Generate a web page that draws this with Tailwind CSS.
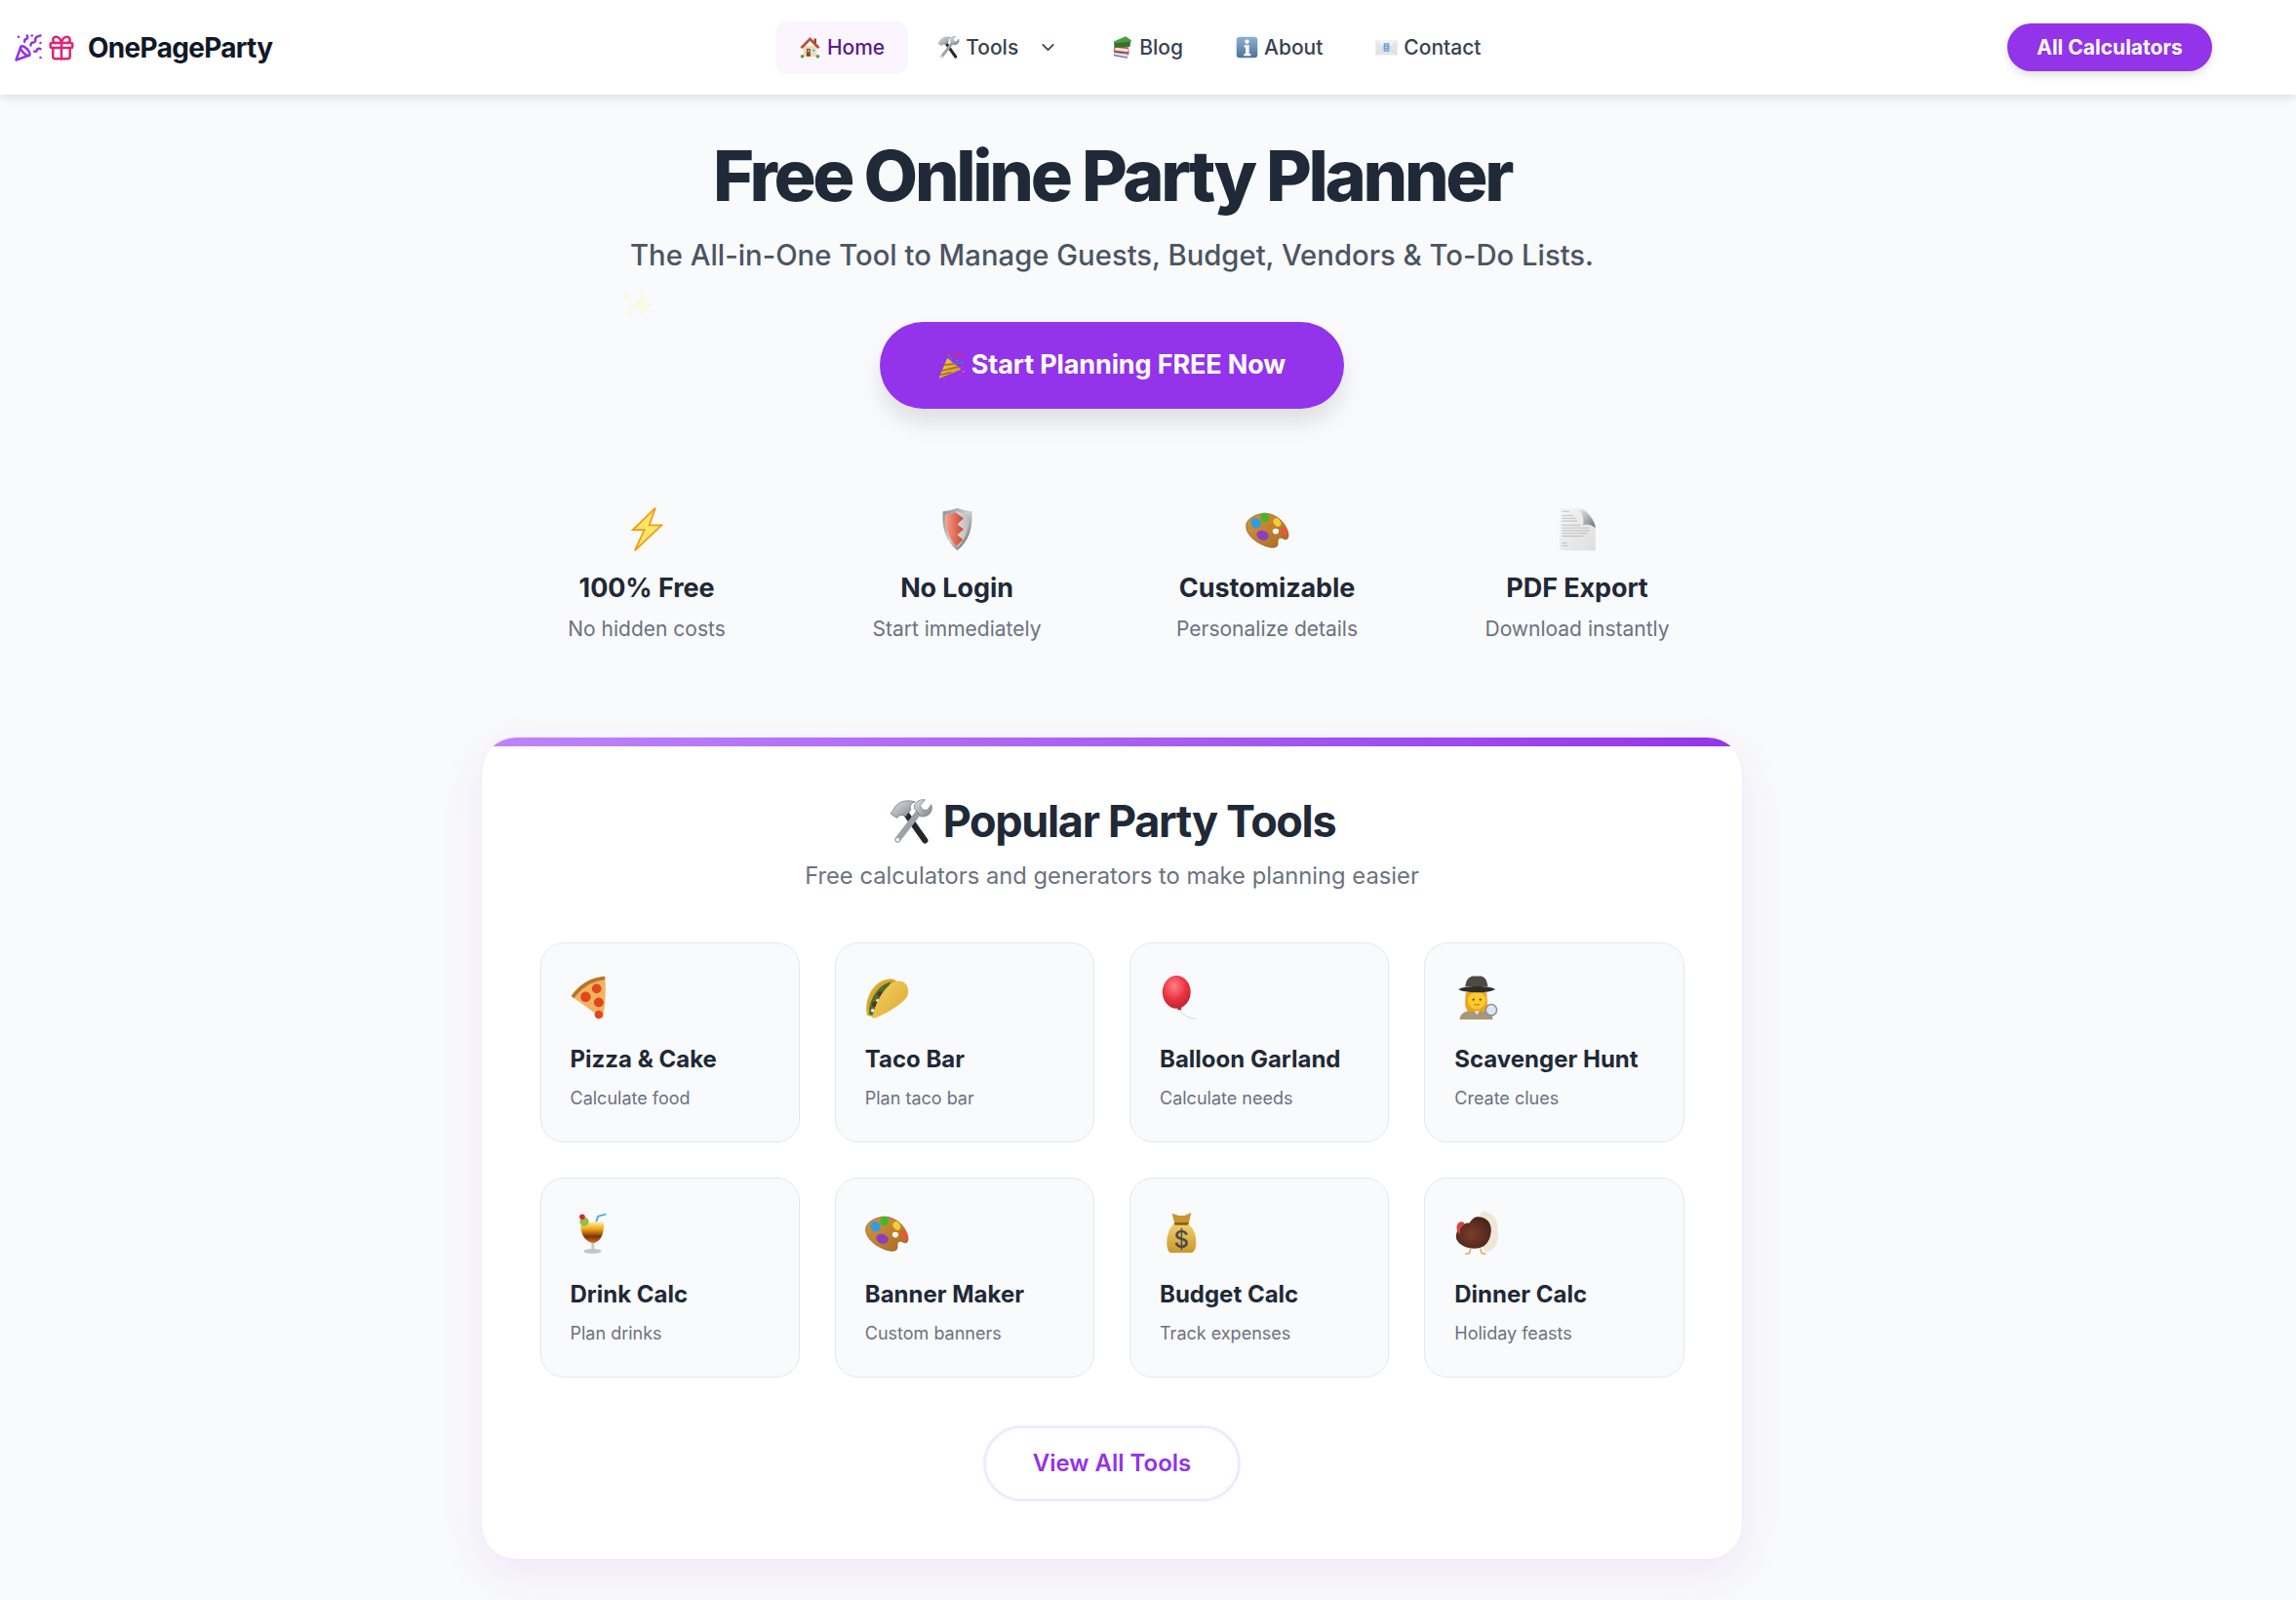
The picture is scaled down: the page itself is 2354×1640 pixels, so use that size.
<!DOCTYPE html>
<html lang="en">
<head>
    <meta charset="UTF-8">
    <meta name="viewport" content="width=device-width, initial-scale=1.0">
    <title>OnePageParty - Free Online Party Planner</title>
    <script src="https://cdn.jsdelivr.net/npm/@tailwindcss/browser@4"></script>
</head>
<body class="bg-[#f9fafb] font-['Inter',sans-serif] overflow-hidden">

    <!-- emoji drawings, reused below -->
    <svg class="absolute w-0 h-0" aria-hidden="true">
        <defs>
            <linearGradient id="g-wood" x1="0" y1="0" x2="1" y2="1"><stop offset="0" stop-color="#d9963a"/><stop offset="1" stop-color="#a86a22"/></linearGradient>
            <linearGradient id="g-steel" x1="0" y1="0" x2="1" y2="1"><stop offset="0" stop-color="#e2e5e8"/><stop offset="1" stop-color="#7b8087"/></linearGradient>
            <linearGradient id="g-info" x1="0" y1="0" x2="0" y2="1"><stop offset="0" stop-color="#8fb2d3"/><stop offset="1" stop-color="#4c7297"/></linearGradient>
            <linearGradient id="g-shield" x1="0" y1="0" x2="1" y2="1"><stop offset="0" stop-color="#8a8a8a"/><stop offset="0.5" stop-color="#d0d0d0"/><stop offset="1" stop-color="#4e4e4e"/></linearGradient>
            <linearGradient id="g-shield-in" x1="0" y1="0" x2="1" y2="0"><stop offset="0" stop-color="#f2f2f2"/><stop offset="1" stop-color="#bcbcbc"/></linearGradient>
            <linearGradient id="g-red" x1="0" y1="0" x2="1" y2="0"><stop offset="0" stop-color="#fb9c88"/><stop offset="1" stop-color="#c9452f"/></linearGradient>
            <linearGradient id="g-page" x1="0" y1="0" x2="1" y2="1"><stop offset="0" stop-color="#f6f6f6"/><stop offset="1" stop-color="#dedede"/></linearGradient>
            <linearGradient id="g-curl" x1="0" y1="0" x2="1" y2="1"><stop offset="0" stop-color="#fafafa"/><stop offset="1" stop-color="#6f6f6f"/></linearGradient>
            <radialGradient id="g-balloon" cx="0.42" cy="0.32" r="0.75"><stop offset="0" stop-color="#ff8088"/><stop offset="0.55" stop-color="#ea3340"/><stop offset="1" stop-color="#b3202d"/></radialGradient>
            <linearGradient id="g-drink" x1="0" y1="0" x2="0" y2="1"><stop offset="0" stop-color="#fff0b0"/><stop offset="0.35" stop-color="#f3a512"/><stop offset="0.7" stop-color="#7a300a"/><stop offset="1" stop-color="#d87a1a"/></linearGradient>
            <linearGradient id="g-bag" x1="0" y1="0" x2="0" y2="1"><stop offset="0" stop-color="#f0cd6a"/><stop offset="1" stop-color="#c9982f"/></linearGradient>
            <linearGradient id="g-shell" x1="0" y1="0" x2="1" y2="1"><stop offset="0" stop-color="#f5d465"/><stop offset="1" stop-color="#dba72f"/></linearGradient>
            <radialGradient id="g-turkey" cx="0.45" cy="0.55" r="0.6"><stop offset="0" stop-color="#7a3f2c"/><stop offset="1" stop-color="#4a2318"/></radialGradient>
            <linearGradient id="g-cone" x1="0" y1="0" x2="1" y2="1"><stop offset="0" stop-color="#f7d655"/><stop offset="1" stop-color="#c78d1d"/></linearGradient>
        </defs>

        <symbol id="e-house" viewBox="0 0 64 64">
            <rect x="13" y="28" width="38" height="30" fill="#f3d9a8"/>
            <path d="M32 3 L4 31 L10 36 L32 14 L54 36 L60 31Z" fill="#b5533c"/>
            <rect x="43" y="7" width="7" height="15" fill="#a9452f"/>
            <rect x="22" y="36" width="11" height="22" fill="#7a4a26"/>
            <rect x="24" y="39" width="7" height="7" fill="#6fb3e0"/>
            <rect x="38" y="36" width="9" height="9" fill="#6fb3e0" stroke="#fff" stroke-width="1.5"/>
            <circle cx="10" cy="58" r="5" fill="#5a9a3a"/>
            <circle cx="54" cy="58" r="5" fill="#5a9a3a"/>
        </symbol>

        <symbol id="e-tools" viewBox="0 0 64 64">
            <path d="M52 59 L23 18" stroke="#24272c" stroke-width="8.500" stroke-linecap="round"/>
            <path d="M7 15 C12 4 25 0 38 4 C31 6 30 11 32 15 L24 25 C20 21 15 23 12 27 L3 21Z" fill="url(#g-steel)" stroke="#6e737a"/>
            <path d="M13 58 L43 19" stroke="#9da2a8" stroke-width="8.500" stroke-linecap="round"/>
            <path d="M37 14 C35 6 43 0 52 1 L45 9 L48 15 L55 16 L61 8 C64 17 58 26 46 25Z" fill="url(#g-steel)" stroke="#6e737a"/>
            <circle cx="13" cy="58" r="2.500" fill="#fff"/>
        </symbol>

        <symbol id="e-books" viewBox="0 0 64 64">
            <path d="M12 44 L50 50 L46 63 L8 56Z" fill="#5a6fa8"/>
            <path d="M12 47 L48 52 L46 60 L10 53Z" fill="#e9e6df"/>
            <path d="M10 28 L50 32 L52 50 L8 46Z" fill="#b93a3a"/>
            <path d="M12 33 L49 36 L49 45 L11 41Z" fill="#efe9dd"/>
            <path d="M8 15 L42 1 L58 12 L54 30 L10 32Z" fill="#4f9a3e"/>
            <path d="M10 20 L54 16 L54 30 L10 32Z" fill="#2f7428"/>
        </symbol>

        <symbol id="e-info" viewBox="0 0 64 64">
            <rect x="2" y="2" width="60" height="60" rx="9" fill="url(#g-info)"/>
            <circle cx="32" cy="16" r="6" fill="#fff"/>
            <path d="M24 26 H38 V50 H43 V56 H23 V50 H28 V32 H24Z" fill="#fff"/>
        </symbol>

        <symbol id="e-mail" viewBox="0 0 64 64">
            <rect x="1" y="12" width="62" height="42" fill="#e4e5e6"/>
            <path d="M1 12 L32 36 L63 12Z" fill="#f3f3f3"/>
            <path d="M1 54 L24 30 M63 54 L40 30" stroke="#c8c9ca" stroke-width="1.5"/>
            <rect x="24" y="20" width="16" height="24" fill="#6f9fe0"/>
            <path d="M28 25 H36 M28 32 H35 M28 39 H36" stroke="#d8e6fa" stroke-width="2.5"/>
        </symbol>

        <symbol id="e-popper" viewBox="0 0 64 64">
            <path d="M1 64 L22 14 L56 42Z" fill="url(#g-cone)"/>
            <path d="M15 31 L39 28 M9 45 L48 36 M5 55 L32 49" stroke="#a8701a" stroke-width="4"/>
            <path d="M24 10 L20 0 M37 10 L36 1 M50 3 L47 13 M59 4 L56 12" stroke="#d8344a" stroke-width="3" stroke-linecap="round"/>
            <path d="M43 28 L64 24 M33 18 L24 4" stroke="#2f80e0" stroke-width="3" stroke-linecap="round"/>
            <circle cx="58" cy="36" r="2.200" fill="#e0506a"/><circle cx="62" cy="47" r="2" fill="#e8a020"/>
            <circle cx="56" cy="56" r="2" fill="#d8344a"/><circle cx="46" cy="20" r="2.500" fill="#44a85a"/>
        </symbol>

        <symbol id="e-bolt" viewBox="0 0 64 64">
            <path d="M44 1 L11 33 L28 33 L14 63 L53 26 L35 26Z" fill="#ffe66b" stroke="#f59a0b" stroke-width="2.5" stroke-linejoin="miter"/>
        </symbol>

        <symbol id="e-shield" viewBox="0 0 64 64">
            <path d="M32 1 C26 4 17 5 11 6 C9 30 15 49 32 63 C49 49 55 30 53 6 C47 5 38 4 32 1Z" fill="url(#g-shield)"/>
            <path d="M32 6 C26 9 20 10 15 11 C14 29 19 46 32 58 C45 46 50 29 49 11 C44 10 38 9 32 6Z" fill="url(#g-shield-in)"/>
            <path d="M29 7 C25 9 20 10 15 11 C14 29 19 46 31 57 L40 47 L32 40 L41 32 L32 25 L41 16Z" fill="url(#g-red)"/>
        </symbol>

        <symbol id="e-palette" viewBox="0 0 64 64">
            <path d="M20 10 C36 5 56 16 62 36 C64 46 60 49 54 45 C50 43 46 46 47 52 C48 60 38 60 28 56 C12 50 0 38 1 26 C2 18 10 13 20 10Z" fill="url(#g-wood)" stroke="#8a5520"/>
            <ellipse cx="15" cy="23" rx="7" ry="8" transform="rotate(-35 15 23)" fill="#2d9fe0"/>
            <ellipse cx="28" cy="15" rx="6" ry="7" fill="#3fb82e"/>
            <ellipse cx="46" cy="22" rx="5" ry="6.5" transform="rotate(-35 46 22)" fill="#f2cf2e"/>
            <ellipse cx="25" cy="41" rx="9" ry="7" transform="rotate(20 25 41)" fill="#8a3fc0"/>
            <ellipse cx="57" cy="35" rx="4" ry="7" transform="rotate(-25 57 35)" fill="#f0523a"/>
            <ellipse cx="44" cy="35" rx="4.5" ry="4" fill="#f9fafb"/>
        </symbol>

        <symbol id="e-doc" viewBox="0 0 64 64">
            <path d="M6 1 H36 C46 1 58 20 58 30 V63 H6Z" fill="url(#g-page)"/>
            <path d="M30 1 C44 1 58 20 58 30 C50 24 44 24 40 26 C42 16 38 6 30 1Z" fill="url(#g-curl)"/>
            <path d="M9 6 H20 M9 12 H26 M9 16 H30 M9 20 H32 M9 26 H36 M9 30 H48 M9 34 H50 M9 38 H46 M9 42 H40 M9 52 H16 M9 56 H18" stroke="#b5b5b5" stroke-width="1.2"/>
        </symbol>
    </svg>

    <!-- navigation -->
    <header class="bg-white h-[97px] shadow-[0_3px_9px_rgba(0,0,0,0.12)] relative">
        <div class="w-[2280px] h-full pl-[14px] pr-[12px] flex items-center justify-between">
            <a class="flex items-center" href="#">
                <svg class="w-[30px] h-[30px] text-[#9333ea]" viewBox="0 0 24 24" fill="none" stroke="currentColor" stroke-width="2" stroke-linecap="round" stroke-linejoin="round">
                    <path d="M5.8 11.3 2 22l10.7-3.79"/><path d="M4 3h.01"/><path d="M22 8h.01"/><path d="M15 2h.01"/><path d="M22 20h.01"/>
                    <path d="m22 2-2.24.75a2.9 2.9 0 0 0-1.96 3.12c.1.86-.57 1.63-1.45 1.63h-.38c-.86 0-1.6.6-1.76 1.44L14 10"/>
                    <path d="m22 13-.82-.33c-.86-.34-1.82.2-1.98 1.11c-.11.7-.72 1.22-1.43 1.22H17"/>
                    <path d="m11 2 .33.82c.34.86-.2 1.82-1.11 1.98C9.52 4.9 9 5.52 9 6.23V7"/>
                    <path d="M11 13c1.93 1.93 2.83 4.17 2 5-.83.83-3.07-.07-5-2-1.93-1.93-2.83-4.17-2-5 .83-.83 3.07.07 5 2Z"/>
                </svg>
                <svg class="w-[30px] h-[30px] ml-[4px] text-[#db2777]" viewBox="0 0 24 24" fill="none" stroke="currentColor" stroke-width="2" stroke-linecap="round" stroke-linejoin="round">
                    <rect x="3" y="8" width="18" height="4" rx="1"/><path d="M12 8v13"/>
                    <path d="M19 12v7a2 2 0 0 1-2 2H7a2 2 0 0 1-2-2v-7"/>
                    <path d="M7.5 8a2.5 2.5 0 0 1 0-5A4.8 8 0 0 1 12 8a4.8 8 0 0 1 4.5-5 2.5 2.5 0 0 1 0 5"/>
                </svg>
                <span class="ml-[12px] text-[28px] font-bold tracking-tight text-[#111827]">OnePageParty</span>
            </a>
            <nav class="flex items-center gap-[6px] text-[21px] font-medium text-[#374151]">
                <a class="flex items-center gap-[6px] h-[54px] px-[24px] rounded-[12px] bg-[#faf5ff] text-[#581c87]" href="#"><svg class="w-[23px] h-[23px]"><use href="#e-house"/></svg>Home</a>
                <a class="flex items-center gap-[6px] h-[54px] pl-[24px] pr-[24px]" href="#"><svg class="w-[23px] h-[23px]"><use href="#e-tools"/></svg>Tools
                    <svg class="w-[21px] h-[21px] ml-[14px]" viewBox="0 0 24 24" fill="none" stroke="currentColor" stroke-width="2" stroke-linecap="round" stroke-linejoin="round"><path d="m6 9 6 6 6-6"/></svg>
                </a>
                <a class="flex items-center gap-[6px] h-[54px] px-[24px]" href="#"><svg class="w-[23px] h-[23px]"><use href="#e-books"/></svg>Blog</a>
                <a class="flex items-center gap-[6px] h-[54px] px-[24px]" href="#"><svg class="w-[23px] h-[23px]"><use href="#e-info"/></svg>About</a>
                <a class="flex items-center gap-[6px] h-[54px] px-[24px]" href="#"><svg class="w-[23px] h-[23px]"><use href="#e-mail"/></svg>Contact</a>
            </nav>
            <a class="flex items-center justify-center w-[210px] h-[49px] rounded-full bg-[#9333ea] text-white text-[21px] font-bold shadow-[0_4px_9px_rgba(0,0,0,0.12)]" href="#">All Calculators</a>
        </div>
    </header>

    <main class="w-[2280px] flex flex-col items-center pt-[43px] pb-[60px] relative">
        <!-- faint sparkle floating over the hero -->
        <svg class="absolute left-[637px] top-[200px] w-[33px] h-[30px] text-[#fdf8e1]" viewBox="0 0 33 30" fill="currentColor">
            <path d="M21 1 C22 10 25 13 33 15 C25 17 22 20 21 29 C20 20 17 17 9 15 C17 13 20 10 21 1Z"/>
            <path d="M5 1 C5.500 5 7 6 10 7 C7 8 5.500 9 5 13 C4.500 9 3 8 0 7 C3 6 4.500 5 5 1Z"/>
            <path d="M9 18 C9.500 21 11 22 13 23 C11 24 9.500 25 9 30 C8.500 25 7 24 5 23 C7 22 8.500 21 9 18Z"/>
        </svg>

        <h1 class="text-[72px] leading-[79px] font-extrabold tracking-[-3.36px] text-[#1f2937]">Free Online Party Planner</h1>
        <p class="mt-[20px] text-[29.25px] leading-[45px] font-medium text-[#4b5563]">The All-in-One Tool to Manage Guests, Budget, Vendors &amp; To-Do Lists.</p>

        <a class="mt-[46px] flex items-center justify-center gap-[7px] w-[476px] h-[89px] rounded-full bg-[#9333ea] text-white text-[27px] font-bold tracking-[-0.13px] shadow-[0_15px_22px_rgba(0,0,0,0.1)]" href="#">
            <svg class="w-[27px] h-[27px]"><use href="#e-popper"/></svg>Start Planning FREE Now
        </a>

        <!-- features -->
        <section class="mt-[101px] grid grid-cols-4 w-[1272px] text-center">
            <div class="flex flex-col items-center">
                <svg class="w-[45px] h-[45px]"><use href="#e-bolt"/></svg>
                <h3 class="mt-[18px] text-[27px] leading-[40px] font-bold tracking-[-0.1px] text-[#1f2937]">100% Free</h3>
                <p class="mt-[6px] text-[21px] leading-[32px] text-[#6b7280]">No hidden costs</p>
            </div>
            <div class="flex flex-col items-center">
                <svg class="w-[45px] h-[45px]"><use href="#e-shield"/></svg>
                <h3 class="mt-[18px] text-[27px] leading-[40px] font-bold tracking-[-0.1px] text-[#1f2937]">No Login</h3>
                <p class="mt-[6px] text-[21px] leading-[32px] text-[#6b7280]">Start immediately</p>
            </div>
            <div class="flex flex-col items-center">
                <svg class="w-[45px] h-[45px]"><use href="#e-palette"/></svg>
                <h3 class="mt-[18px] text-[27px] leading-[40px] font-bold tracking-[-0.1px] text-[#1f2937]">Customizable</h3>
                <p class="mt-[6px] text-[21px] leading-[32px] text-[#6b7280]">Personalize details</p>
            </div>
            <div class="flex flex-col items-center">
                <svg class="w-[45px] h-[45px]"><use href="#e-doc"/></svg>
                <h3 class="mt-[18px] text-[27px] leading-[40px] font-bold tracking-[-0.1px] text-[#1f2937]">PDF Export</h3>
                <p class="mt-[6px] text-[21px] leading-[32px] text-[#6b7280]">Download instantly</p>
            </div>
        </section>

        <!-- popular tools card -->
        <section class="mt-[94px] w-[1294px] h-[844px] bg-white rounded-[36px] border border-[#f3e8ff] shadow-[0_15px_45px_rgba(147,51,234,0.09)] overflow-hidden flex flex-col items-center">
            <div class="w-full h-[9px] shrink-0 bg-gradient-to-r from-[#c084fc] to-[#9333ea]"></div>
            <h2 class="mt-[49px] flex items-center text-[45px] leading-[56px] font-bold tracking-[-1.35px] text-[#1f2937]">
                <svg class="w-[46px] h-[46px] mr-[10px]"><use href="#e-tools"/></svg>Popular Party Tools
            </h2>
            <p class="mt-[10px] text-[23.75px] leading-[36px] text-[#6b7280]">Free calculators and generators to make planning easier</p>

            <div class="mt-[50px] grid grid-cols-4 gap-[36px] w-[1173px]">
                <a class="h-[205px] pt-[33px] pl-[30px] rounded-[24px] bg-[#f9fafb] border border-[#e5e7eb]" href="#">
                    <svg class="block w-[45px] h-[45px]" viewBox="0 0 64 64">
                        <path d="M50 1 Q18 4 1 30 L47 63 Q53 30 50 1Z" fill="#f3b35e"/>
                        <path d="M50 1 Q18 4 1 30 L5 33 Q22 9 50 6Z" fill="#b9742a"/>
                        <circle cx="38" cy="19" r="7" fill="#e2461f"/><circle cx="22" cy="31" r="7.500" fill="#e2461f"/>
                        <circle cx="41" cy="39" r="7" fill="#e2461f"/><circle cx="41" cy="57" r="6" fill="#e2461f"/>
                    </svg>
                    <h3 class="mt-[23px] text-[24px] leading-[36px] font-bold text-[#1f2937]">Pizza &amp; Cake</h3>
                    <p class="mt-[8px] text-[18px] leading-[27px] text-[#6b7280]">Calculate food</p>
                </a>
                <a class="h-[205px] pt-[33px] pl-[30px] rounded-[24px] bg-[#f9fafb] border border-[#e5e7eb]" href="#">
                    <svg class="block w-[45px] h-[45px]" viewBox="0 0 64 64">
                        <path d="M3 58 C-3 36 12 6 36 5 C44 5 46 8 46 10 C30 20 18 42 12 60Z" fill="#dca52e"/>
                        <path d="M6 57 C4 40 16 14 38 9 C30 22 18 40 12 58Z" fill="#4c6f2e"/>
                        <circle cx="14" cy="42" r="4" fill="#5a3526"/><circle cx="22" cy="27" r="4" fill="#5a3526"/><circle cx="11" cy="51" r="2.500" fill="#f2f2f2"/><circle cx="18" cy="36" r="2" fill="#f2f2f2"/>
                        <path d="M10 61 C16 38 28 14 46 8 C58 6 65 16 62 28 C60 38 30 56 16 61 C13 62 12 62 10 61Z" fill="url(#g-shell)"/>
                    </svg>
                    <h3 class="mt-[23px] text-[24px] leading-[36px] font-bold text-[#1f2937]">Taco Bar</h3>
                    <p class="mt-[8px] text-[18px] leading-[27px] text-[#6b7280]">Plan taco bar</p>
                </a>
                <a class="h-[205px] pt-[33px] pl-[30px] rounded-[24px] bg-[#f9fafb] border border-[#e5e7eb]" href="#">
                    <svg class="block w-[45px] h-[45px]" viewBox="0 0 64 64">
                        <path d="M29 48 C31 56 40 62 53 63" fill="none" stroke="#c9c9c9" stroke-width="1"/>
                        <path d="M27 46 L31 46 L32 50 L26 50Z" fill="#c62a36"/>
                        <ellipse cx="24.500" cy="24" rx="20.500" ry="24" fill="url(#g-balloon)"/>
                    </svg>
                    <h3 class="mt-[23px] text-[24px] leading-[36px] font-bold text-[#1f2937]">Balloon Garland</h3>
                    <p class="mt-[8px] text-[18px] leading-[27px] text-[#6b7280]">Calculate needs</p>
                </a>
                <a class="h-[205px] pt-[33px] pl-[30px] rounded-[24px] bg-[#f9fafb] border border-[#e5e7eb]" href="#">
                    <svg class="block w-[45px] h-[45px]" viewBox="0 0 64 64">
                        <path d="M8 64 C8 54 18 50 33 50 C48 50 56 54 56 64Z" fill="#a89878"/>
                        <path d="M28 50 L33 57 L38 50Z" fill="#f1f1f1"/>
                        <path d="M17 24 H47 C48 36 50 46 46 52 H20 C14 46 16 36 17 24Z" fill="#eda41e"/>
                        <circle cx="33" cy="36" r="13" fill="#fbcb2d"/>
                        <circle cx="28" cy="35" r="1.500" fill="#4a3410"/><circle cx="38" cy="35" r="1.500" fill="#4a3410"/>
                        <path d="M29 42 Q33 44 37 42" stroke="#a8581a" stroke-width="1.200" fill="none"/>
                        <path d="M16 16 C18 2 24 0 33 1 C42 0 47 2 49 16Z" fill="#4d4a46"/>
                        <path d="M6 20 C14 14 52 14 60 20 C52 26 14 26 6 20Z" fill="#2f2d2a"/>
                        <circle cx="54" cy="50" r="8" fill="#d4e8f5" stroke="#8a8d90" stroke-width="2"/>
                    </svg>
                    <h3 class="mt-[23px] text-[24px] leading-[36px] font-bold text-[#1f2937]">Scavenger Hunt</h3>
                    <p class="mt-[8px] text-[18px] leading-[27px] text-[#6b7280]">Create clues</p>
                </a>
                <a class="h-[205px] pt-[33px] pl-[30px] rounded-[24px] bg-[#f9fafb] border border-[#e5e7eb]" href="#">
                    <svg class="block w-[45px] h-[45px]" viewBox="0 0 64 64">
                        <path d="M35 24 L40 8 L52 5" stroke="#3ea6e8" stroke-width="2.500" fill="none"/>
                        <path d="M15 16 H48 C50 32 44 46 33 47 C21 46 13 32 15 16Z" fill="url(#g-drink)"/>
                        <circle cx="20" cy="16" r="6.500" fill="#8fc23f"/>
                        <circle cx="17" cy="9" r="4" fill="#d92631"/>
                        <rect x="30.500" y="47" width="4" height="9" fill="#c9c9c9"/>
                        <ellipse cx="32" cy="59" rx="13" ry="3.500" fill="#c4c4c4"/>
                    </svg>
                    <h3 class="mt-[23px] text-[24px] leading-[36px] font-bold text-[#1f2937]">Drink Calc</h3>
                    <p class="mt-[8px] text-[18px] leading-[27px] text-[#6b7280]">Plan drinks</p>
                </a>
                <a class="h-[205px] pt-[33px] pl-[30px] rounded-[24px] bg-[#f9fafb] border border-[#e5e7eb]" href="#">
                    <svg class="block w-[45px] h-[45px]"><use href="#e-palette"/></svg>
                    <h3 class="mt-[23px] text-[24px] leading-[36px] font-bold text-[#1f2937]">Banner Maker</h3>
                    <p class="mt-[8px] text-[18px] leading-[27px] text-[#6b7280]">Custom banners</p>
                </a>
                <a class="h-[205px] pt-[33px] pl-[30px] rounded-[24px] bg-[#f9fafb] border border-[#e5e7eb]" href="#">
                    <svg class="block w-[45px] h-[45px]" viewBox="0 0 64 64">
                        <path d="M20 20 C8 30 8 60 16 61 H46 C56 60 56 30 42 20Z" fill="url(#g-bag)"/>
                        <path d="M18 4 L28 7 L36 7 L46 3 L42 20 L22 20Z" fill="#c8962f"/>
                        <rect x="21" y="17" width="21" height="4" rx="2" fill="#8a6518"/>
                        <text x="31.500" y="54" font-size="34" font-family="Inter, sans-serif" font-weight="500" text-anchor="middle" fill="#4a4a4a">$</text>
                    </svg>
                    <h3 class="mt-[23px] text-[24px] leading-[36px] font-bold text-[#1f2937]">Budget Calc</h3>
                    <p class="mt-[8px] text-[18px] leading-[27px] text-[#6b7280]">Track expenses</p>
                </a>
                <a class="h-[205px] pt-[33px] pl-[30px] rounded-[24px] bg-[#f9fafb] border border-[#e5e7eb]" href="#">
                    <svg class="block w-[45px] h-[45px]" viewBox="0 0 64 64">
                        <path d="M40 1 C54 -1 66 14 63 30 C66 42 60 60 46 60 C36 50 30 20 40 1Z" fill="#efe6da"/>
                        <path d="M36 9 C50 10 56 22 53 34 C51 48 42 55 30 55 C14 55 0 46 3 34 C5 24 16 16 22 18 C26 12 30 8 36 9Z" fill="url(#g-turkey)"/>
                        <path d="M6 32 C0 24 6 13 14 17 C16 19 12 22 9 26 C8 29 9 32 8 35Z" fill="#d9433f"/>
                        <path d="M24 55 L22 62 L16 63 M38 55 L40 62 L46 63" stroke="#e2a04a" stroke-width="2" fill="none"/>
                    </svg>
                    <h3 class="mt-[23px] text-[24px] leading-[36px] font-bold text-[#1f2937]">Dinner Calc</h3>
                    <p class="mt-[8px] text-[18px] leading-[27px] text-[#6b7280]">Holiday feasts</p>
                </a>
            </div>

            <a class="mt-[49px] flex items-center justify-center w-[264px] h-[78px] rounded-full bg-white border-[3px] border-[#f3e8ff] text-[24px] font-semibold text-[#9333ea]" href="#">View All Tools</a>
        </section>
    </main>
</body>
</html>
